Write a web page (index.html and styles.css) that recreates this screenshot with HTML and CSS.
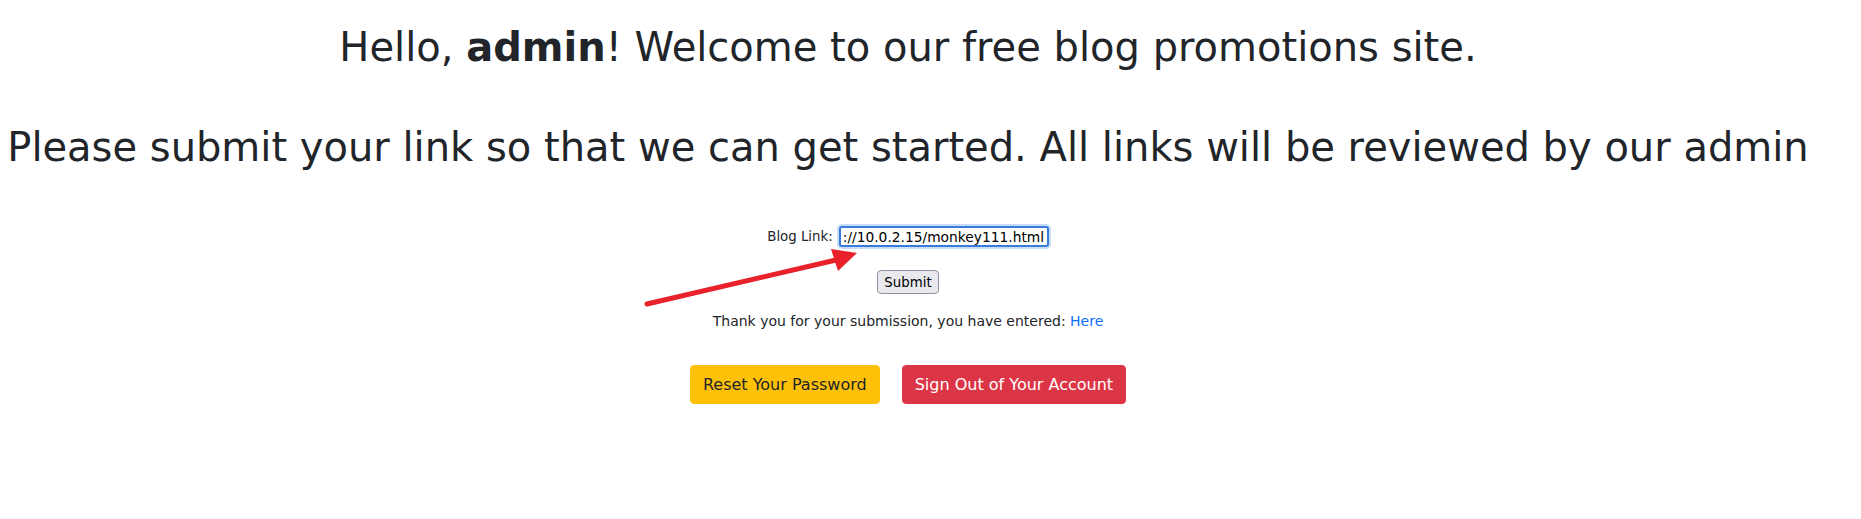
FILE: index.html
```html
<!DOCTYPE html>
<html lang="en">
<head>
<meta charset="utf-8">
<title>Blog promotions</title>
<link rel="stylesheet" href="styles.css">
</head>
<body>
<main class="page">
  <h1 class="title">Hello, <b>admin</b>! Welcome to our free blog promotions site.</h1>
  <h1 class="title title-second">Please submit your link so that we can get started. All links will be reviewed by our admin</h1>
  <form class="link-form">
    <div class="field-row">
      <label class="field-label" for="link">Blog Link:</label>
      <input class="field-input" id="link" type="text" value="://10.0.2.15/monkey111.html">
    </div>
    <div class="submit-row">
      <button class="submit-btn" type="button">Submit</button>
    </div>
    <p class="thanks">Thank you for your submission, you have entered: <a class="thanks-link" href="#">Here</a></p>
  </form>
  <div class="actions">
    <a class="btn btn-warning" href="#">Reset Your Password</a>
    <a class="btn btn-danger" href="#">Sign Out of Your Account</a>
  </div>
</main>
<svg class="arrow" width="1861" height="519" viewBox="0 0 1861 519">
  <line x1="647" y1="304" x2="836" y2="260" stroke="#e8212b" stroke-width="5" stroke-linecap="round"/>
  <polygon points="857,253 831,249 838,271" fill="#e8212b"/>
</svg>
</body>
</html>
```
FILE: styles.css
```css
html, body {
  margin: 0;
  padding: 0;
  background: #ffffff;
}

body {
  font-family: "DejaVu Sans", sans-serif;
  color: #212529;
  position: relative;
}

.page {
  width: 1816px;
  text-align: center;
  padding-top: 23px;
}

.title {
  font-size: 40px;
  font-weight: 400;
  line-height: 48px;
  margin: 0;
}

.title b {
  font-weight: 700;
}

.title-second {
  margin-top: 52px;
}

.link-form {
  margin: 55px 0 0;
  font-size: 13.33px;
}

.field-row {
  display: flex;
  justify-content: center;
  align-items: center;
  gap: 6px;
}

.field-label {
  line-height: 21px;
}

.field-input {
  box-sizing: border-box;
  width: 210px;
  height: 21px;
  margin: 0;
  padding: 0 2px;
  font-family: "DejaVu Sans", sans-serif;
  font-size: 13.8px;
  color: #000;
  border: 2px solid #3a7bd9;
  border-radius: 3px;
  box-shadow: 0 0 0 2px #c6dcf7;
  outline: none;
}

.submit-row {
  margin-top: 23px;
  display: flex;
  justify-content: center;
}

.submit-btn {
  box-sizing: border-box;
  height: 24px;
  width: 62px;
  padding: 0 6px;
  font-family: "DejaVu Sans", sans-serif;
  font-size: 13.33px;
  color: #000;
  background: #e9e9ed;
  border: 1px solid #8f8f9d;
  border-radius: 4px;
}

.thanks {
  margin: 18px 0 0;
  font-size: 14px;
  line-height: 18px;
}

.thanks-link {
  color: #0d6efd;
  text-decoration: none;
}

.actions {
  margin-top: 35px;
  display: flex;
  justify-content: center;
  gap: 22px;
}

.btn {
  display: inline-block;
  padding: 6px 12px;
  font-size: 16px;
  line-height: 25px;
  border: 1px solid transparent;
  border-radius: 4px;
  text-decoration: none;
}

.btn-warning {
  background: #ffc107;
  border-color: #ffc107;
  color: #212529;
}

.btn-danger {
  background: #dc3545;
  border-color: #dc3545;
  color: #ffffff;
}

.arrow {
  position: absolute;
  left: 0;
  top: 0;
  pointer-events: none;
}
```
